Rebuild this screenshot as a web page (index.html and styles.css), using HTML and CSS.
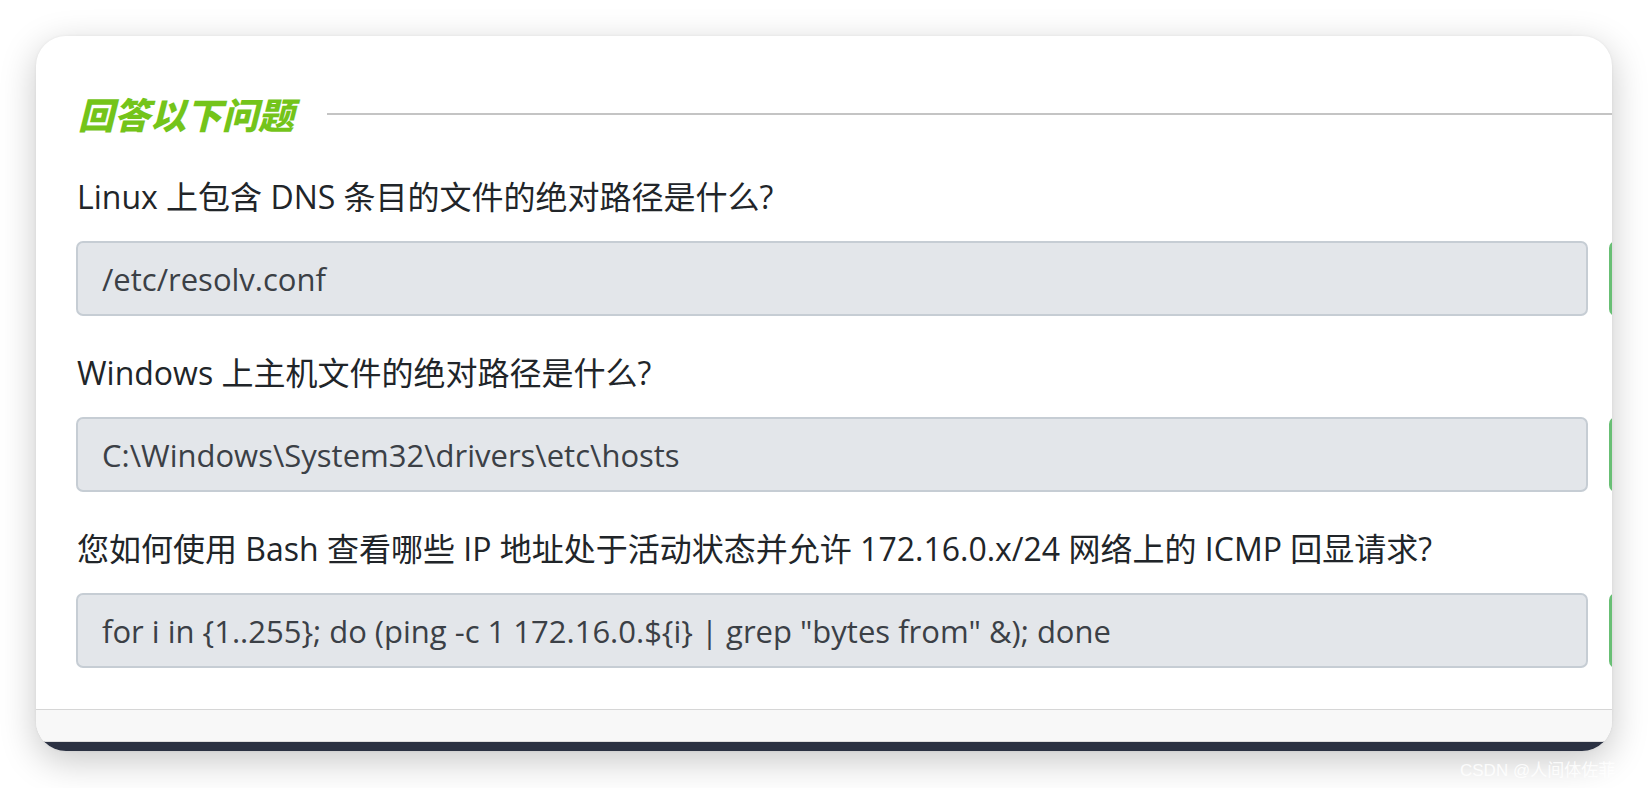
FILE: index.html
```html
<!DOCTYPE html>
<html lang="zh-CN">
<head>
<meta charset="utf-8">
<title>回答以下问题</title>
<link rel="stylesheet" href="styles.css">
</head>
<body>
<div class="page">
  <div class="frame">
    <div class="content">
      <div class="section-head">
        <h2 class="section-title">回答以下问题</h2>
        <div class="section-rule"></div>
      </div>
      <div class="qa">
        <p class="question">Linux 上包含 DNS 条目的文件的绝对路径是什么?</p>
        <div class="answer-row">
          <div class="answer">/etc/resolv.conf</div>
          <div class="btn-correct"></div>
        </div>
      </div>
      <div class="qa">
        <p class="question">Windows 上主机文件的绝对路径是什么?</p>
        <div class="answer-row">
          <div class="answer">C:\Windows\System32\drivers\etc\hosts</div>
          <div class="btn-correct"></div>
        </div>
      </div>
      <div class="qa">
        <p class="question">您如何使用 Bash 查看哪些 IP 地址处于活动状态并允许 172.16.0.x/24 网络上的 ICMP 回显请求?</p>
        <div class="answer-row">
          <div class="answer">for i in {1..255}; do (ping -c 1 172.16.0.${i} | grep "bytes from" &amp;); done</div>
          <div class="btn-correct"></div>
        </div>
      </div>
    </div>
    <div class="footer">
      <div class="footer-bar"></div>
    </div>
  </div>
  <div class="watermark">CSDN @人间体佐菲</div>
</div>
</body>
</html>
```

FILE: styles.css
```css
html, body {
  margin: 0;
  padding: 0;
  background: #ffffff;
}

body {
  width: 1648px;
  height: 788px;
  overflow: hidden;
  font-family: "Open Sans", "Noto Sans CJK SC", sans-serif;
}

.page {
  position: relative;
  padding: 36px 36px 37px 36px;
  height: 788px;
  box-sizing: border-box;
}

.frame {
  width: 1576px;
  height: 715px;
  border-radius: 30px;
  overflow: hidden;
  background: #ffffff;
  box-shadow: 0 10px 36px rgba(0, 0, 0, 0.22), 0 0 3px rgba(0, 0, 0, 0.06);
  display: flex;
  flex-direction: column;
}

.content {
  width: 1700px;
  padding: 57px 0 41px 40px;
  flex: 1;
  box-sizing: border-box;
}

.section-head {
  display: flex;
  align-items: center;
  height: 40px;
  margin-bottom: 46px;
}

.section-title {
  margin: 0;
  font-family: "Noto Sans CJK SC", sans-serif;
  font-weight: 900;
  font-style: italic;
  font-size: 36px;
  line-height: 40px;
  color: #74c41a;
  padding-left: 2px;
}

.section-rule {
  flex: 1;
  height: 2px;
  background: #c4c4c4;
  margin-left: 33px;
  margin-top: 2px;
}

.qa {
  margin-bottom: 39px;
}

.qa:last-child {
  margin-bottom: 0;
}

.question {
  margin: 0 0 26px 1px;
  font-size: 32px;
  line-height: 36px;
  color: #212529;
}

.answer-row {
  display: flex;
  align-items: stretch;
}

.answer {
  flex: 0 0 1512px;
  height: 75px;
  box-sizing: border-box;
  background: #e3e6ea;
  border: 2px solid #c6cdd4;
  border-radius: 7px;
  padding: 0 24px;
  display: flex;
  align-items: center;
  font-size: 31px;
  color: #3b4046;
  white-space: nowrap;
}

.btn-correct {
  flex: 0 0 120px;
  margin-left: 21px;
  background: #68bf74;
  border-radius: 7px;
}

.footer {
  background: #f8f8f8;
  border-top: 1px solid #d6d6d6;
  height: 42px;
  box-sizing: border-box;
  display: flex;
  flex-direction: column;
  justify-content: flex-end;
}

.footer-bar {
  height: 9px;
  background: #2b3142;
  border-top: 1px solid #dedede;
}

.watermark {
  position: absolute;
  left: 1460px;
  top: 756px;
  font-family: "Liberation Sans", "Noto Sans CJK SC", sans-serif;
  font-size: 17px;
  color: rgba(255, 255, 255, 0.85);
  white-space: nowrap;
}
```
